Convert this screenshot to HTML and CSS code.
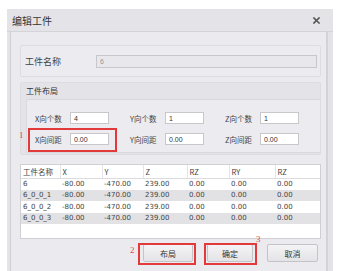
FILE: index.html
```html
<!DOCTYPE html>
<html lang="zh-CN">
<head>
  <meta charset="UTF-8">
  <meta name="viewport" content="width=device-width, initial-scale=1.0">
  <title>编辑工件</title>
  <link rel="stylesheet" href="styles.css">
</head>
<body>
  <div class="dialog">
    <div class="titlebar">
      <span class="title">编辑工件</span>
      <svg class="close" width="7" height="7" viewBox="0 0 7 7">
        <path d="M1 1L6 6M6 1L1 6" stroke="#555" stroke-width="1.6" stroke-linecap="square"/>
      </svg>
    </div>
    <div class="panel">
      <div class="group name-group">
        <span class="name-label">工件名称</span>
        <input class="field name-field" value="6" disabled>
      </div>
      <div class="group layout-group">
        <div class="group-head">工件布局</div>
        <div class="layout-box">
          <div class="row">
            <span class="lbl">X向个数</span><input class="field num" value="4">
            <span class="lbl">Y向个数</span><input class="field num" value="1">
            <span class="lbl">Z向个数</span><input class="field num" value="1">
          </div>
          <div class="row">
            <span class="lbl">X向间距</span><input class="field num" value="0.00">
            <span class="lbl">Y向间距</span><input class="field num" value="0.00">
            <span class="lbl">Z向间距</span><input class="field num" value="0.00">
          </div>
        </div>
      </div>
      <div class="grid">
        <table>
          <thead>
            <tr><th>工件名称</th><th>X</th><th>Y</th><th>Z</th><th>RZ</th><th>RY</th><th>RZ</th></tr>
          </thead>
          <tbody>
            <tr><td>6</td><td>-80.00</td><td>-470.00</td><td>239.00</td><td>0.00</td><td>0.00</td><td>0.00</td></tr>
            <tr><td>6_0_0_1</td><td>-80.00</td><td>-470.00</td><td>239.00</td><td>0.00</td><td>0.00</td><td>0.00</td></tr>
            <tr><td>6_0_0_2</td><td>-80.00</td><td>-470.00</td><td>239.00</td><td>0.00</td><td>0.00</td><td>0.00</td></tr>
            <tr><td>6_0_0_3</td><td>-80.00</td><td>-470.00</td><td>239.00</td><td>0.00</td><td>0.00</td><td>0.00</td></tr>
          </tbody>
        </table>
      </div>
      <div class="buttons">
        <button class="btn">布局</button>
        <button class="btn">确定</button>
        <button class="btn">取消</button>
      </div>
    </div>
  </div>

  <!-- 标注 -->
  <div class="mark box1"></div>
  <div class="mark box2"></div>
  <div class="mark box3"></div>
  <span class="num-tag tag1">1</span>
  <span class="num-tag tag2">2</span>
  <span class="num-tag tag3">3</span>
</body>
</html>
```

FILE: styles.css
```css
* {
  box-sizing: border-box;
}
body {
  position: relative;
  margin: 0;
  height: 271px;
  overflow: hidden;
  background-color: #fff;
  font-family: "Noto Sans CJK SC", "Liberation Sans", sans-serif;
  color: #333;
}
.dialog {
  margin: 9px 7px 0 7px;
  height: 262px;
  background-color: #e4e4e8;
}
.titlebar {
  display: flex;
  align-items: center;
  justify-content: space-between;
  height: 23px;
  padding: 0 13px 0 5px;
  border-bottom: 1px solid #d4d4d8;
}
.title {
  font-size: 10px;
  color: #333;
}
.panel {
  height: 239px;
  margin: 0 5px 0 3px;
  padding: 13px 5px 0 9px;
  border-left: 1px solid #cfcfd4;
  border-right: 2px solid #d2d2d7;
  background-color: #ebebef;
}
.group {
  border: 1px solid #dcdce1;
  border-radius: 2px;
  background-color: #ececf0;
}
.name-group {
  display: flex;
  align-items: center;
  height: 32px;
  padding: 0 3px 0 4px;
}
.name-label {
  width: 71px;
  font-size: 9px;
  color: #444;
}
.field {
  height: 12px;
  padding: 0 3px;
  border: 1px solid #c8c8cc;
  background-color: #fff;
  font-family: "Liberation Sans", sans-serif;
  font-size: 7px;
  color: #333;
  outline: none;
}
.name-field {
  flex: 1;
  height: 13px;
  background-color: #e8e8ec;
  color: #999;
}
.layout-group {
  margin-top: 5px;
  height: 73px;
  padding: 0 0 1px 5px;
  background-color: #e4e4e8;
}
.group-head {
  height: 16px;
  line-height: 16px;
  font-size: 8px;
  color: #333;
}
.layout-box {
  height: 54px;
  padding: 12px 0 0 8px;
  border: 1px solid #d8d8dd;
  border-right: none;
  border-radius: 2px 0 0 2px;
  background-color: #ececf0;
}
.row {
  display: flex;
  align-items: center;
  height: 12px;
  margin-bottom: 9px;
}
.lbl {
  width: 37px;
  font-size: 7.5px;
  color: #444;
}
.lbl + .num {
  margin-right: 21px;
}
.num {
  width: 39px;
}
.grid {
  height: 75px;
  margin-top: 9px;
  border: 1px solid #d0d0d4;
  background-color: #fff;
}
table {
  width: 100%;
  border-collapse: collapse;
  font-size: 7.5px;
}
th,
td {
  height: 11.5px;
  padding: 0 0 0 2px;
  text-align: left;
  font-weight: normal;
  white-space: nowrap;
  color: #444;
}
th {
  height: 13px;
  border-right: 1px solid #e4e4e8;
  border-bottom: 1px solid #dcdce0;
}
th:last-child {
  border-right: none;
}
th:nth-child(1) { width: 39px; }
th:nth-child(2) { width: 42px; }
th:nth-child(3) { width: 41px; }
th:nth-child(4) { width: 44px; }
th:nth-child(5) { width: 42px; }
th:nth-child(6) { width: 46px; }
tbody tr:nth-child(even) {
  background-color: #e2e2e4;
}
td {
  font-family: "DejaVu Sans", sans-serif;
  font-size: 7px;
}
.buttons {
  display: flex;
  justify-content: flex-end;
  gap: 14px;
  margin-top: 5px;
  padding-right: 3px;
}
.btn {
  width: 50px;
  height: 18px;
  padding: 0;
  border: 1px solid #c4c4c8;
  border-radius: 2px;
  background: linear-gradient(#f4f4f6, #e4e4e8);
  font-family: "Noto Sans CJK SC", sans-serif;
  font-size: 8px;
  color: #333;
}
.btn:nth-child(2) {
  width: 46px;
}
.btn:nth-child(3) {
  width: 51px;
}

/* 红色标注 */
.mark {
  position: absolute;
  border: 2px solid #e23a3a;
}
.box1 {
  left: 28px;
  top: 128px;
  width: 89px;
  height: 24px;
}
.box2 {
  left: 138px;
  top: 243px;
  width: 58px;
  height: 22px;
}
.box3 {
  left: 204px;
  top: 243px;
  width: 53px;
  height: 22px;
}
.num-tag {
  position: absolute;
  font-family: "Liberation Serif", serif;
  font-size: 9px;
  color: #e04848;
}
.tag1 {
  left: 19px;
  top: 130px;
}
.tag2 {
  left: 130px;
  top: 245px;
}
.tag3 {
  left: 256px;
  top: 234px;
}
```
